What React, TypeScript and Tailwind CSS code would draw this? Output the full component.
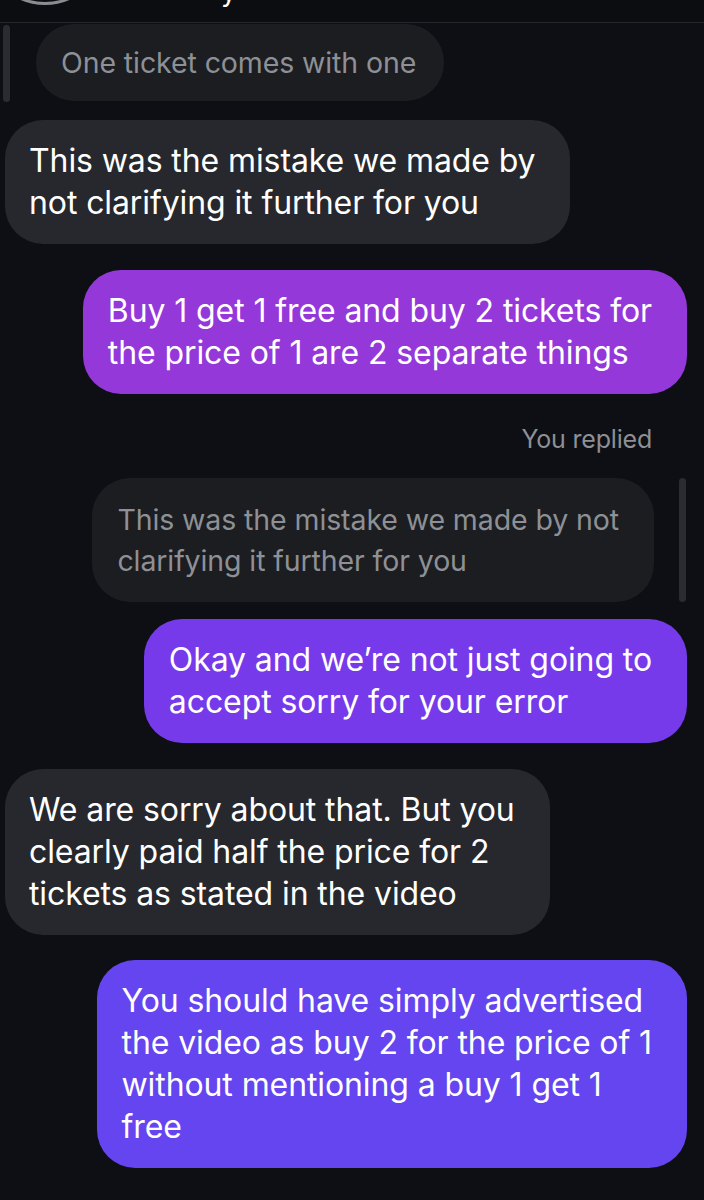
import React from "react";

const font = { fontFamily: "Inter, 'Noto Sans', sans-serif" };

const Incoming = ({ lines }: { lines: string[] }) => (
  <div className="flex justify-start pl-[5px]">
    <div className="bg-[#26282d] rounded-[38px] pl-[24px] pr-[35px] py-[20px] text-white text-[32px] leading-[42px] tracking-[-0.1px]">
      {lines.map((l, i) => (
        <div key={i}>{l}</div>
      ))}
    </div>
  </div>
);

const Outgoing = ({ lines, color }: { lines: string[]; color: string }) => (
  <div className="flex justify-end pr-[17px]">
    <div
      className={`${color} rounded-[38px] pl-[25px] pr-[35px] py-[20px] text-white text-[32px] leading-[42px] tracking-[-0.1px]`}
    >
      {lines.map((l, i) => (
        <div key={i}>{l}</div>
      ))}
    </div>
  </div>
);

export default function App() {
  return (
    <div className="w-[704px] h-[1200px] overflow-hidden bg-[#0d0f14]" style={font}>
      {/* header (mostly scrolled out) */}
      <div className="h-[23px] overflow-hidden bg-[#0b0d11] border-b border-[#24262b] flex items-end gap-[116px]">
        <div className="w-[120px] h-[120px] rounded-full border-[3px] border-[#8a8c91] ml-[-15px] mb-[17px] shrink-0" />
        <div className="text-white text-[28px] leading-[28px] mb-[17px]">y</div>
      </div>

      {/* quoted reply, incoming */}
      <div className="flex items-stretch gap-[26px] pl-[3px] mt-[1px]">
        <div className="w-[7px] rounded-full bg-[#2a2c31] mt-[1px] mb-[-1px]" />
        <div className="bg-[#1b1d21] rounded-[38px] pl-[25px] pr-[28px] py-[18px] text-[#8e9095] text-[28.5px] leading-[41px] tracking-[-0.1px]">
          One ticket comes with one
        </div>
      </div>

      <div className="mt-[19px]">
        <Incoming lines={["This was the mistake we made by", "not clarifying it further for you"]} />
      </div>

      <div className="mt-[26px]">
        <Outgoing
          color="bg-[#9538da]"
          lines={["Buy 1 get 1 free and buy 2 tickets for", "the price of 1 are 2 separate things"]}
        />
      </div>

      <div className="flex justify-end pr-[52px] mt-[30px] text-[#8e9095] text-[25px] leading-[30px] tracking-[-0.2px]">
        You replied
      </div>

      {/* quoted reply, outgoing */}
      <div className="flex justify-end items-stretch gap-[25px] pr-[18px] mt-[24px]">
        <div className="bg-[#1b1d21] rounded-[38px] pl-[25px] pr-[35px] py-[21px] text-[#8e9095] text-[28.5px] leading-[41px] tracking-[-0.1px]">
          <div>This was the mistake we made by not</div>
          <div>clarifying it further for you</div>
        </div>
        <div className="w-[7px] rounded-full bg-[#2a2c31]" />
      </div>

      <div className="mt-[17px]">
        <Outgoing
          color="bg-[#763aea]"
          lines={["Okay and we\u2019re not just going to", "accept sorry for your error"]}
        />
      </div>

      <div className="mt-[26px]">
        <Incoming
          lines={["We are sorry about that. But you", "clearly paid half the price for 2", "tickets as stated in the video"]}
        />
      </div>

      <div className="mt-[25px]">
        <Outgoing
          color="bg-[#6445ef]"
          lines={[
            "You should have simply advertised",
            "the video as buy 2 for the price of 1",
            "without mentioning a buy 1 get 1",
            "free",
          ]}
        />
      </div>
    </div>
  );
}
